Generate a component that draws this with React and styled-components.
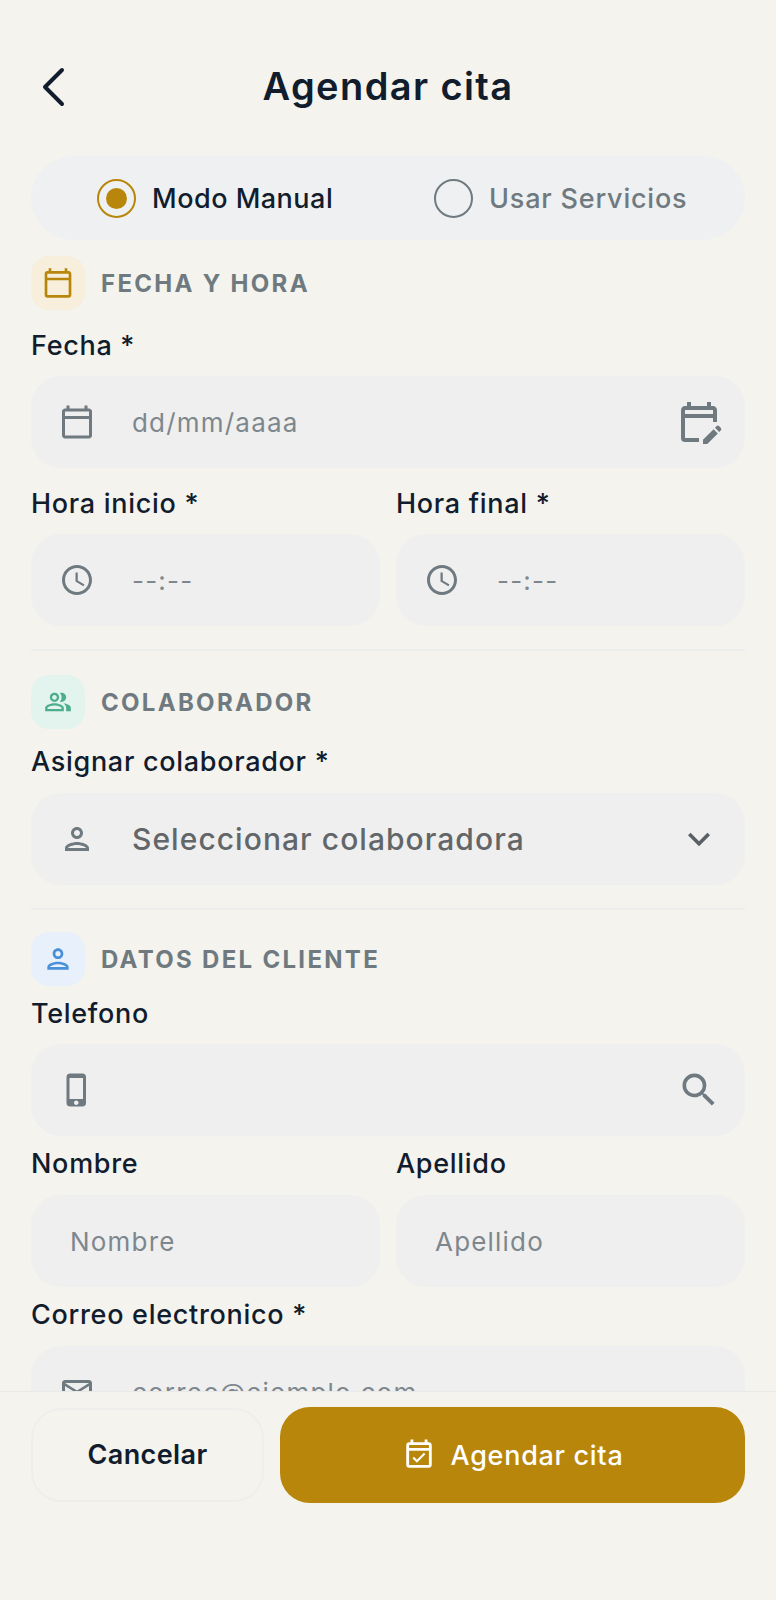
import styled, { createGlobalStyle } from 'styled-components';
import {
    MdOutlineCalendarToday,
    MdOutlineEditCalendar,
    MdOutlineAccessTime,
    MdOutlinePeopleAlt,
    MdOutlinePerson,
    MdKeyboardArrowDown,
    MdOutlinePhoneIphone,
    MdSearch,
    MdOutlineMailOutline,
    MdOutlineEventAvailable,
} from 'react-icons/md';

const GlobalStyle = createGlobalStyle`
    html, body {
        margin: 0;
        padding: 0;
        background: #f4f3ee;
    }
    * {
        box-sizing: border-box;
    }
`;

const Screen = styled.div`
    display: flex;
    flex-direction: column;
    height: 1600px;
    background: #f4f3ee;
    font-family: Inter, 'Noto Sans', sans-serif;
    color: #111c2d;
`;

const Content = styled.main`
    flex: 1;
    min-height: 0;
    overflow: hidden;
    padding: 50px 31px 0 31px;
`;

const Header = styled.header`
    display: flex;
    align-items: center;
    justify-content: center;
    position: relative;
    height: 72px;
    margin-bottom: 34px;
`;

const BackButton = styled.button`
    position: absolute;
    left: 8px;
    top: 15px;
    display: flex;
    padding: 0;
    border: 0;
    background: none;
    color: #111c2d;
`;

const Title = styled.h1`
    margin: 0;
    font-size: 38px;
    font-weight: 600;
    letter-spacing: 1.4px;
`;

const ModeSwitch = styled.div`
    display: flex;
    align-items: center;
    height: 84px;
    padding-left: 66px;
    border-radius: 42px;
    background: #eff0f1;
`;

const ModeOption = styled.div`
    display: flex;
    align-items: center;
    gap: 16px;
    width: ${(p) => p.$width}px;
    font-size: 27px;
    font-weight: 500;
    letter-spacing: ${(p) => (p.$active ? 0.5 : 0.8)}px;
    color: ${(p) => (p.$active ? '#111c2d' : '#6f7a80')};
`;

const Radio = styled.span`
    display: flex;
    align-items: center;
    justify-content: center;
    width: 39px;
    height: 39px;
    border-radius: 50%;
    border: 2px solid ${(p) => (p.$active ? '#b8860b' : '#6f7a80')};
    &::after {
        content: '';
        display: ${(p) => (p.$active ? 'block' : 'none')};
        width: 21px;
        height: 21px;
        border-radius: 50%;
        background: #b8860b;
    }
`;

const SectionHead = styled.div`
    display: flex;
    align-items: center;
    gap: 16px;
    margin-top: ${(p) => p.$top}px;
`;

const SectionIcon = styled.span`
    display: flex;
    align-items: center;
    justify-content: center;
    width: 54px;
    height: 54px;
    border-radius: 18px;
    background: ${(p) => p.$bg};
    color: ${(p) => p.$color};
    font-size: ${(p) => p.$size || 32}px;
`;

const SectionTitle = styled.h2`
    margin: 0;
    font-size: 24px;
    font-weight: 700;
    letter-spacing: 2.3px;
    text-transform: uppercase;
    color: #6f7a80;
`;

const Label = styled.label`
    display: block;
    height: 28px;
    margin-top: ${(p) => p.$top}px;
    margin-bottom: ${(p) => p.$bottom || 17}px;
    font-size: 27px;
    line-height: 28px;
    font-weight: 500;
    letter-spacing: 0.7px;
    color: #111c2d;
`;

const Row = styled.div`
    display: grid;
    grid-template-columns: minmax(0, 1fr) minmax(0, 1fr);
    column-gap: 16px;
`;

const InputBox = styled.div`
    display: flex;
    align-items: center;
    height: 92px;
    padding-right: 22px;
    padding-left: ${(p) => (p.$plain ? 39 : 28)}px;
    border-radius: 30px;
    background: #efefef;
    color: #6f7a80;
`;

const LeadIcon = styled.span`
    display: flex;
    justify-content: center;
    flex: none;
    width: 36px;
    margin-right: 37px;
    font-size: 36px;
    color: #6f7a80;
`;

const TextInput = styled.input`
    flex: 1;
    min-width: 0;
    padding: 0;
    border: 0;
    outline: 0;
    background: none;
    font-family: inherit;
    font-size: 26px;
    letter-spacing: 1.2px;
    color: #111c2d;
    &::placeholder {
        color: #7d878d;
        opacity: 1;
    }
`;

const SelectText = styled.span`
    flex: 1;
    font-size: 30px;
    font-weight: 500;
    letter-spacing: 1.05px;
    color: #626669;
`;

const TrailIcon = styled.span`
    display: flex;
    flex: none;
    margin-right: ${(p) => p.$right || 0}px;
    font-size: ${(p) => p.$size}px;
    color: ${(p) => p.$color || '#6f7a80'};
`;

const Divider = styled.hr`
    height: 2px;
    margin: 23px 0 0 0;
    border: 0;
    background: #eceded;
`;

const Footer = styled.footer`
    display: flex;
    flex: none;
    gap: 16px;
    height: 209px;
    padding: 15px 31px 0 31px;
    border-top: 1px solid #e9e9e8;
    background: #f4f3ee;
`;

const CancelButton = styled.button`
    width: 233px;
    height: 94px;
    margin-top: 1px;
    border: 2px solid #eeeeec;
    border-radius: 30px;
    background: none;
    font-family: inherit;
    font-size: 27px;
    font-weight: 600;
    letter-spacing: 0.4px;
    padding-bottom: 2px;
    color: #111c2d;
`;

const SubmitButton = styled.button`
    display: flex;
    align-items: center;
    justify-content: center;
    gap: 15px;
    flex: 1;
    height: 96px;
    border: 0;
    border-radius: 30px;
    background: #b8860b;
    font-family: inherit;
    font-size: 27px;
    font-weight: 500;
    letter-spacing: 0.7px;
    color: #fff;
    svg {
        font-size: 34px;
    }
`;

export default function App() {
    return (
        <Screen>
            <GlobalStyle />
            <Content>
                <Header>
                    <BackButton>
                        <svg width="28" height="44" viewBox="0 0 28 44" fill="none">
                            <path
                                d="M23 5 L6 22 L23 39"
                                stroke="currentColor"
                                strokeWidth="4"
                                strokeLinecap="round"
                                strokeLinejoin="round"
                            />
                        </svg>
                    </BackButton>
                    <Title>Agendar cita</Title>
                </Header>

                <ModeSwitch>
                    <ModeOption $active $width={337}>
                        <Radio $active />
                        Modo Manual
                    </ModeOption>
                    <ModeOption $width={290}>
                        <Radio />
                        Usar Servicios
                    </ModeOption>
                </ModeSwitch>

                <SectionHead $top={16}>
                    <SectionIcon $bg="#f7eedb" $color="#b8860b">
                        <MdOutlineCalendarToday />
                    </SectionIcon>
                    <SectionTitle>Fecha y hora</SectionTitle>
                </SectionHead>
                <Label $top={22} $bottom={16}>Fecha *</Label>
                <InputBox>
                    <LeadIcon>
                        <MdOutlineCalendarToday />
                    </LeadIcon>
                    <TextInput placeholder="dd/mm/aaaa" />
                    <TrailIcon $size={48}>
                        <MdOutlineEditCalendar />
                    </TrailIcon>
                </InputBox>
                <Row>
                    <div>
                        <Label $top={22} $bottom={16}>Hora inicio *</Label>
                        <InputBox>
                            <LeadIcon>
                                <MdOutlineAccessTime />
                            </LeadIcon>
                            <TextInput placeholder="--:--" />
                        </InputBox>
                    </div>
                    <div>
                        <Label $top={22} $bottom={16}>Hora final *</Label>
                        <InputBox>
                            <LeadIcon>
                                <MdOutlineAccessTime />
                            </LeadIcon>
                            <TextInput placeholder="--:--" />
                        </InputBox>
                    </div>
                </Row>
                <Divider />

                <SectionHead $top={24}>
                    <SectionIcon $bg="#e3f3ee" $color="#4cae8d" $size={28}>
                        <MdOutlinePeopleAlt />
                    </SectionIcon>
                    <SectionTitle>Colaborador</SectionTitle>
                </SectionHead>
                <Label $top={19}>Asignar colaborador *</Label>
                <InputBox>
                    <LeadIcon>
                        <MdOutlinePerson />
                    </LeadIcon>
                    <SelectText>Seleccionar colaboradora</SelectText>
                    <TrailIcon $size={44} $right={2} $color="#5a6066">
                        <MdKeyboardArrowDown />
                    </TrailIcon>
                </InputBox>
                <Divider />

                <SectionHead $top={22}>
                    <SectionIcon $bg="#e7f0fb" $color="#4a8fd9">
                        <MdOutlinePerson />
                    </SectionIcon>
                    <SectionTitle>Datos del cliente</SectionTitle>
                </SectionHead>
                <Label $top={14} $bottom={16}>Telefono</Label>
                <InputBox>
                    <LeadIcon>
                        <MdOutlinePhoneIphone />
                    </LeadIcon>
                    <TextInput />
                    <TrailIcon $size={44} $right={2}>
                        <MdSearch />
                    </TrailIcon>
                </InputBox>
                <Row>
                    <div>
                        <Label $top={14}>Nombre</Label>
                        <InputBox $plain>
                            <TextInput placeholder="Nombre" />
                        </InputBox>
                    </div>
                    <div>
                        <Label $top={14}>Apellido</Label>
                        <InputBox $plain>
                            <TextInput placeholder="Apellido" />
                        </InputBox>
                    </div>
                </Row>
                <Label $top={14}>Correo electronico *</Label>
                <InputBox>
                    <LeadIcon>
                        <MdOutlineMailOutline />
                    </LeadIcon>
                    <TextInput placeholder="correo@ejemplo.com" />
                </InputBox>
            </Content>

            <Footer>
                <CancelButton>Cancelar</CancelButton>
                <SubmitButton>
                    <MdOutlineEventAvailable />
                    Agendar cita
                </SubmitButton>
            </Footer>
        </Screen>
    );
}
